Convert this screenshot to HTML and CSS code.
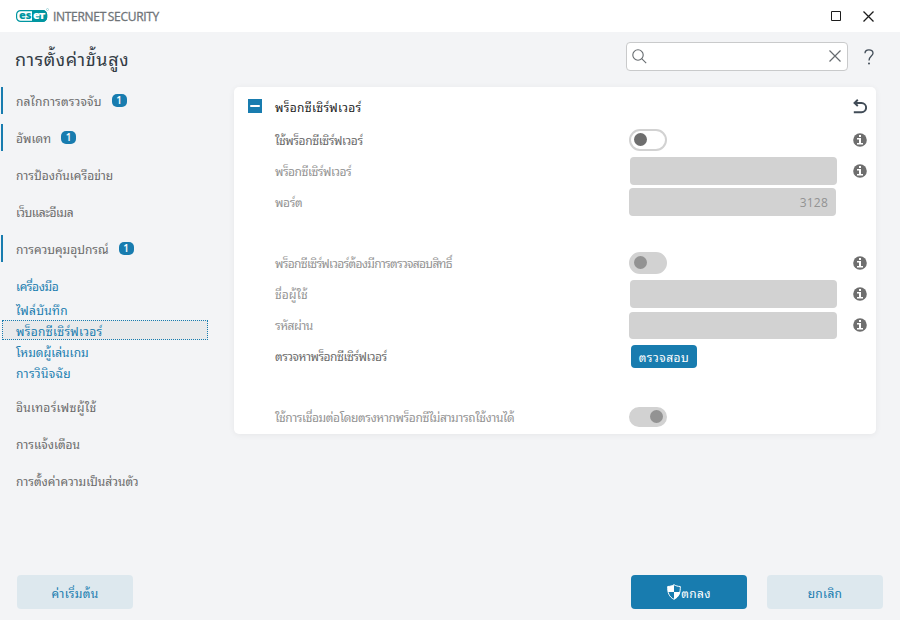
FILE: index.html
```
<!DOCTYPE html>
<html lang="th">
<head>
    <meta charset="UTF-8">
    <meta name="viewport" content="width=device-width, initial-scale=1.0">
    <title>ESET Internet Security</title>
    <link rel="stylesheet" href="styles.css">
</head>
<body>
    <svg class="symbols" aria-hidden="true">
        <symbol id="info" viewBox="0 0 14 14">
            <circle cx="7" cy="7" r="6.8" fill="#6e6e6e"/>
            <path d="M6 2h2v2H6zM4 5h4v5h2v1.500H4V10h2V6.500H4z" fill="#fff"/>
        </symbol>
    </svg>

    <header class="titlebar">
        <div class="brand">
            <svg class="logo" width="33" height="16" viewBox="0 0 33 16">
                <rect x="0.6" y="2.6" width="30" height="10.8" rx="4" fill="#fff" stroke="#0096a1" stroke-width="1.2"/>
                <path d="M16 2h10.500a4.700 4.700 0 0 1 4.700 4.700v2.600a4.700 4.700 0 0 1-4.700 4.700H16z" fill="#0096a1"/>
                <text class="logo-text" x="3" y="11" textLength="12.5" fill="#0096a1">es</text>
                <text class="logo-text" x="17" y="11" textLength="12.5" fill="#fff">eт</text>
                <circle cx="31.5" cy="1.5" r="1" fill="none" stroke="#7cc5ca" stroke-width="0.6"/>
            </svg>
            <span class="product">INTERNET SECURITY</span>
        </div>
        <div class="window-buttons">
            <svg width="10" height="10" viewBox="0 0 10 10"><path d="M.5.5h9v9h-9z" fill="none" stroke="#1c1c1c"/></svg>
            <svg width="11" height="11" viewBox="0 0 11 11"><path d="M.5.5l10 10M10.500.5l-10 10" stroke="#1c1c1c" stroke-width="1.300"/></svg>
        </div>
    </header>

    <div class="toolbar">
        <h1>การตั้งค่าขั้นสูง</h1>
        <div class="search">
            <svg width="15" height="15" viewBox="0 0 15 15" fill="none" stroke="#666b6f" stroke-width="1.100"><circle cx="6" cy="6" r="5.200"/><path d="M9.700 9.700l4.500 4.500"/></svg>
            <svg width="12" height="12" viewBox="0 0 12 12" stroke="#666b6f" stroke-width="1.200"><path d="M.5.5l11 11M11.500.5l-11 11"/></svg>
        </div>
        <svg class="help" width="10" height="16" viewBox="0 0 10 16"><path d="M1 4.300C1 2 2.600.8 4.900.8S9 2.100 9 4.200C9 7 5 7.300 5 11.500" fill="none" stroke="#414c57" stroke-width="1.300"/><circle cx="5" cy="14.500" r="1" fill="#414c57"/></svg>
    </div>

    <div class="content">
        <nav class="sidebar">
            <a class="item marked"><span class="loose">กลไกการตรวจจับ</span><b class="badge">1</b></a>
            <a class="item marked"><span>อัพเดท</span><b class="badge">1</b></a>
            <a class="item"><span>การป้องกันเครือข่าย</span></a>
            <a class="item"><span class="tighter">เว็บและอีเมล</span></a>
            <a class="item marked"><span>การควบคุมอุปกรณ์</span><b class="badge">1</b></a>
            <a class="item active"><span class="tight">เครื่องมือ</span></a>
            <div class="sub">
                <a><span class="looser">ไฟล์บันทึก</span></a>
                <a class="selected"><span class="looser">พร็อกซีเซิร์ฟเวอร์</span></a>
                <a><span>โหมดผู้เล่นเกม</span></a>
                <a><span class="looser">การวินิจฉัย</span></a>
            </div>
            <a class="item"><span class="looser">อินเทอร์เฟซผู้ใช้</span></a>
            <a class="item"><span>การแจ้งเตือน</span></a>
            <a class="item"><span>การตั้งค่าความเป็นส่วนตัว</span></a>
        </nav>

        <main class="card">
            <div class="card-head">
                <svg class="collapse" width="14" height="14" viewBox="0 0 14 14"><path d="M0 0h14v14H0z" fill="#187caf"/><path d="M3 7h8" stroke="#fff" stroke-width="2" stroke-linecap="round"/></svg>
                <h2 class="looser">พร็อกซีเซิร์ฟเวอร์</h2>
                <svg class="undo" width="14" height="15" viewBox="0 0 14 15" fill="none" stroke="#414c57"><path d="M2 4h6.500a4.600 4.600 0 0 1 0 9.200H.8" stroke-width="1.900"/><path d="M4.800.8L1.500 4l3.300 3" stroke-width="1.900"/></svg>
            </div>
            <div class="row">
                <label class="tight">ใช้พร็อกซีเซิร์ฟเวอร์</label>
                <span class="toggle"></span>
                <svg class="info"><use href="#info"/></svg>
            </div>
            <div class="row disabled">
                <label class="tighter">พร็อกซีเซิร์ฟเวอร์</label>
                <span class="field inset"></span>
                <svg class="info"><use href="#info"/></svg>
            </div>
            <div class="row disabled">
                <label class="tight">พอร์ต</label>
                <span class="field port">3128</span>
            </div>
            <div class="row disabled spaced">
                <label class="tightest">พร็อกซีเซิร์ฟเวอร์ต้องมีการตรวจสอบสิทธิ์</label>
                <span class="toggle"></span>
                <svg class="info"><use href="#info"/></svg>
            </div>
            <div class="row disabled">
                <label>ชื่อผู้ใช้</label>
                <span class="field inset"></span>
                <svg class="info"><use href="#info"/></svg>
            </div>
            <div class="row disabled">
                <label class="tighter">รหัสผ่าน</label>
                <span class="field wide"></span>
                <svg class="info"><use href="#info"/></svg>
            </div>
            <div class="row">
                <label class="tighter">ตรวจหาพร็อกซีเซิร์ฟเวอร์</label>
                <button class="detect">ตรวจสอบ</button>
            </div>
            <div class="row disabled spaced">
                <label class="tight">ใช้การเชื่อมต่อโดยตรงหากพร็อกซีไม่สามารถใช้งานได้</label>
                <span class="toggle on"></span>
            </div>
        </main>
    </div>

    <footer class="footer">
        <button class="btn defaults"><span class="looser">ค่าเริ่มต้น</span></button>
        <button class="btn primary">
            <svg width="14" height="16" viewBox="0 0 14 16"><path d="M7 .7c1.700 1.100 3.800 1.700 6.300 1.800C13.500 8.500 12 13 7 15.300 2 13 .5 8.500.7 2.500 3.200 2.400 5.300 1.800 7 .7z" fill="#187caf" stroke="#fff"/><path d="M7 1v7H1C.6 6 .7 4 .7 2.500 3.200 2.400 5.300 1.800 7 1zM7 8h6c-.6 3.300-2.500 5.900-6 7.300z" fill="#fff"/></svg>
            <span class="looser">ตกลง</span>
        </button>
        <button class="btn"><span class="looser">ยกเลิก</span></button>
    </footer>
</body>
</html>
```
FILE: styles.css
```
* {
    box-sizing: border-box;
}

body {
    margin: 0;
    width: 900px;
    height: 620px;
    display: flex;
    flex-direction: column;
    background: #f3f4f6;
    color: #6a6a6a;
    font-family: "Leelawadee UI", "Noto Sans Thai Looped", Loma, Waree, Garuda, "Noto Serif Thai", "Open Sans", sans-serif;
    font-size: 12px;
    overflow: hidden;
}

svg {
    flex: none;
}

.symbols {
    display: none;
}

.titlebar {
    display: flex;
    justify-content: space-between;
    align-items: center;
    height: 32px;
    padding: 0 26px 0 16px;
    background: #fff;
}

.brand {
    display: flex;
    align-items: center;
    gap: 4px;
}

.logo-text {
    font: 800 11px "Open Sans", sans-serif;
}

.product {
    font-family: "Open Sans", sans-serif;
    font-size: 12px;
    letter-spacing: -0.3px;
    word-spacing: -1px;
    color: #6f7478;
    -webkit-text-stroke: 0.3px #6f7478;
}

.window-buttons {
    display: flex;
    align-items: center;
    gap: 22px;
}

.toolbar {
    display: flex;
    align-items: center;
    height: 48px;
    padding: 0 26px 0 15px;
}

h1 {
    flex: 1;
    margin: 4px 0 0;
    font-size: 18px;
    font-weight: normal;
    line-height: 1;
    letter-spacing: 0.6px;
    color: #333c45;
}

.search {
    display: flex;
    align-items: center;
    justify-content: space-between;
    width: 222px;
    height: 29px;
    padding: 0 6px 0 5px;
    border: 1px solid #c9cacb;
    border-radius: 4px;
    background: #fff;
}

.help {
    margin: 2px 0 0 16px;
}

.content {
    display: flex;
    flex: 1;
    align-items: flex-start;
    padding-top: 7px;
}

.sidebar {
    display: flex;
    flex-direction: column;
    gap: 10px;
    width: 234px;
}

.item {
    display: flex;
    align-items: center;
    gap: 10px;
    height: 27px;
    margin-left: 1px;
    padding-left: 13px;
    border-left: 2px solid transparent;
    white-space: nowrap;
}

.marked {
    border-color: #187caf;
}

.active,
.sub {
    color: #187caf;
}

.badge {
    width: 15px;
    height: 13px;
    border-radius: 5px;
    background: #187caf;
    color: #fff;
    font: 600 10px/13px "Open Sans", sans-serif;
    text-align: center;
}

.sub {
    margin-top: -10px;
}

.sub a {
    display: flex;
    align-items: center;
    width: 206px;
    height: 21px;
    margin-left: 2px;
    padding-left: 13px;
    border: 1px solid transparent;
    white-space: nowrap;
}

.sub .selected {
    height: 20px;
    margin-bottom: 1px;
    border: 1px dotted #187caf;
    background: #e9eaeb;
}

/* Thai labels keep the widths of the native dialog */
.tight {
    letter-spacing: -0.4px;
}

.tighter {
    letter-spacing: -0.5px;
}

.tightest {
    letter-spacing: -0.7px;
}

.loose {
    letter-spacing: 0.15px;
}

.looser {
    letter-spacing: 0.3px;
}

.card {
    width: 642px;
    height: 347px;
    padding: 4px 9px 0 14px;
    border-radius: 5px;
    background: #fff;
    box-shadow: 0 1px 6px rgba(0, 0, 0, 0.06);
}

.card-head {
    display: flex;
    align-items: center;
    height: 30px;
    margin-bottom: 3px;
}

h2 {
    flex: 1;
    margin: 0 0 0 13px;
    font-size: 12px;
    font-weight: normal;
    color: #222;
}

.row {
    display: grid;
    grid-template-columns: 354px 1fr 14px;
    align-items: center;
    height: 31px;
    padding-left: 27px;
    white-space: nowrap;
}

.spaced {
    margin-top: 30px;
}

.disabled {
    color: #939393;
}

.toggle {
    display: flex;
    align-items: center;
    width: 38px;
    height: 22px;
    padding-left: 3px;
    border: 2px solid #d2d2d2;
    border-radius: 11px;
}

.toggle::before {
    content: "";
    width: 13px;
    height: 13px;
    border-radius: 50%;
    background: #6e6e6e;
}

.disabled .toggle {
    background: #d2d2d2;
}

.disabled .toggle::before {
    background: #939393;
}

.toggle.on {
    height: 20px;
    padding-left: 19px;
}

.field {
    width: 207px;
    height: 28px;
    border-radius: 4px;
    background: #d2d2d2;
}

.inset {
    margin-left: 1px;
}

.wide {
    width: 208px;
    height: 27px;
    margin-top: 1px;
}

.port {
    padding-right: 8px;
    font-family: "Open Sans", sans-serif;
    font-size: 12px;
    line-height: 29px;
    letter-spacing: 0.2px;
    text-align: right;
}

.info {
    width: 14px;
    height: 14px;
}

button {
    padding: 0;
    border: 0;
    border-radius: 4px;
    font: inherit;
}

.detect {
    width: 66px;
    height: 23px;
    margin: 2px 0 0 2px;
    background: #187caf;
    color: #fff;
    letter-spacing: 0.5px;
}

.footer {
    display: flex;
    gap: 20px;
    padding: 0 17px 11px;
}

.btn {
    display: flex;
    align-items: center;
    justify-content: center;
    width: 116px;
    height: 34px;
    background: #dde8ee;
    color: #187caf;
}

.primary {
    background: #187caf;
    color: #fff;
}

.defaults {
    margin-right: auto;
}
```
